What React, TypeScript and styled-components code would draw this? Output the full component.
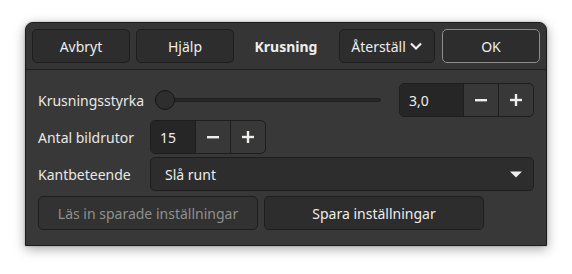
import React from "react";
import styled, { createGlobalStyle } from "styled-components";

const Global = createGlobalStyle`
  html, body { margin: 0; padding: 0; background: #ffffff; }
  body { font-family: "Noto Sans", "Open Sans", sans-serif; font-size: 14px; color: #eeeeec; }
  * { box-sizing: border-box; }
`;

const Page = styled.div`
  padding: 22px 25px;
  width: 572px;
  height: 274px;
`;

const Window = styled.div`
  width: 522px;
  height: 224px;
  background: #383838;
  border: 1px solid #1c1c1c;
  border-radius: 8px 8px 0 0;
  box-shadow: 0 3px 12px rgba(0, 0, 0, 0.35), 0 0 2px rgba(0, 0, 0, 0.3);
  display: flex;
  flex-direction: column;
  overflow: hidden;
`;

const Header = styled.div`
  height: 47px;
  padding: 6px 6px;
  background: #353535;
  border-bottom: 1px solid #1f1f1f;
  display: grid;
  grid-template-columns: 1fr auto 1fr;
  align-items: center;
`;

const Group = styled.div<{ $end?: boolean }>`
  display: flex;
  gap: 6px;
  justify-content: ${(p) => (p.$end ? "flex-end" : "flex-start")};
`;

const HeadButton = styled.button<{ $w?: number; $accent?: boolean }>`
  width: ${(p) => p.$w ?? 98}px;
  height: 34px;
  border-radius: 5px;
  border: 1px solid ${(p) => (p.$accent ? "#8d8d8d" : "#1e1e1e")};
  background: #2d2d2d;
  color: #eeeeec;
  font: inherit;
  display: flex;
  align-items: center;
  justify-content: center;
  gap: 3px;
  padding: 0;
`;

const Title = styled.div`
  font-weight: bold;
  padding: 0 20px;
`;

const Body = styled.div`
  padding: 13px 12px 0 12px;
  display: flex;
  flex-direction: column;
  gap: 4px;
`;

const Row = styled.div`
  display: grid;
  grid-template-columns: 112px 1fr;
  align-items: center;
  height: 33px;
`;

const Label = styled.div`
  color: #e8e8e6;
`;

const ScaleRow = styled.div`
  display: flex;
  align-items: center;
  gap: 18px;
`;

const Scale = styled.div`
  flex: 1;
  position: relative;
  height: 20px;
  margin-left: 5px;
  display: flex;
  align-items: center;
`;

const Trough = styled.div`
  flex: 1;
  height: 4px;
  border-radius: 2px;
  background: #272727;
  border: 1px solid #202020;
`;

const Knob = styled.div`
  position: absolute;
  left: 0;
  top: 0;
  width: 20px;
  height: 20px;
  border-radius: 50%;
  background: #2e2e2e;
  border: 1px solid #151515;
`;

const Spin = styled.div`
  display: flex;
  height: 34px;
  border: 1px solid #1e1e1e;
  border-radius: 5px;
  overflow: hidden;
  background: #383838;
`;

const SpinEntry = styled.div<{ $w: number }>`
  width: ${(p) => p.$w}px;
  background: #262626;
  display: flex;
  align-items: center;
  padding-left: 9px;
  color: #eeeeec;
`;

const SpinBtn = styled.div`
  width: 35px;
  border-left: 1px solid #1e1e1e;
  display: flex;
  align-items: center;
  justify-content: center;
`;

const Combo = styled.div`
  height: 34px;
  border: 1px solid #1e1e1e;
  border-radius: 5px;
  background: #2d2d2d;
  display: flex;
  align-items: center;
  justify-content: space-between;
  padding: 0 11px 0 14px;
`;

const ButtonRow = styled.div`
  display: flex;
  gap: 6px;
  margin-top: 2px;
`;

const ActionButton = styled.button<{ $disabled?: boolean }>`
  width: 220px;
  height: 34px;
  border-radius: 5px;
  border: 1px solid #1e1e1e;
  background: ${(p) => (p.$disabled ? "#323232" : "#2d2d2d")};
  color: ${(p) => (p.$disabled ? "#8f908e" : "#eeeeec")};
  font: inherit;
  padding: 0;
`;

const Minus = () => (
  <svg width="14" height="14" viewBox="0 0 14 14">
    <rect x="1" y="6" width="12" height="2.4" fill="#eeeeec" />
  </svg>
);
const Plus = () => (
  <svg width="14" height="14" viewBox="0 0 14 14">
    <rect x="1" y="5.8" width="12" height="2.4" fill="#eeeeec" />
    <rect x="5.8" y="1" width="2.4" height="12" fill="#eeeeec" />
  </svg>
);
const Chevron = () => (
  <svg width="14" height="14" viewBox="0 0 14 14">
    <path d="M2 4.5 L7 9.5 L12 4.5" stroke="#eeeeec" strokeWidth="2.2" fill="none" />
  </svg>
);
const Triangle = () => (
  <svg width="12" height="8" viewBox="0 0 12 8">
    <path d="M0 1.5 L12 1.5 L6 7.5 Z" fill="#eeeeec" />
  </svg>
);

export default function App() {
  return (
    <>
      <Global />
      <Page>
        <Window>
          <Header>
            <Group>
              <HeadButton>Avbryt</HeadButton>
              <HeadButton>Hjälp</HeadButton>
            </Group>
            <Title>Krusning</Title>
            <Group $end>
              <HeadButton $w={96}>
                Återställ <Chevron />
              </HeadButton>
              <HeadButton $accent style={{ marginLeft: 1 }}>OK</HeadButton>
            </Group>
          </Header>
          <Body>
            <Row>
              <Label>Krusningsstyrka</Label>
              <ScaleRow>
                <Scale>
                  <Trough />
                  <Knob />
                </Scale>
                <Spin>
                  <SpinEntry $w={63}>3,0</SpinEntry>
                  <SpinBtn><Minus /></SpinBtn>
                  <SpinBtn><Plus /></SpinBtn>
                </Spin>
              </ScaleRow>
            </Row>
            <Row>
              <Label>Antal bildrutor</Label>
              <div style={{ display: "flex" }}>
                <Spin>
                  <SpinEntry $w={44}>15</SpinEntry>
                  <SpinBtn><Minus /></SpinBtn>
                  <SpinBtn><Plus /></SpinBtn>
                </Spin>
              </div>
            </Row>
            <Row>
              <Label>Kantbeteende</Label>
              <Combo>
                <span>Slå runt</span>
                <Triangle />
              </Combo>
            </Row>
            <ButtonRow>
              <ActionButton $disabled>Läs in sparade inställningar</ActionButton>
              <ActionButton>Spara inställningar</ActionButton>
            </ButtonRow>
          </Body>
        </Window>
      </Page>
    </>
  );
}
